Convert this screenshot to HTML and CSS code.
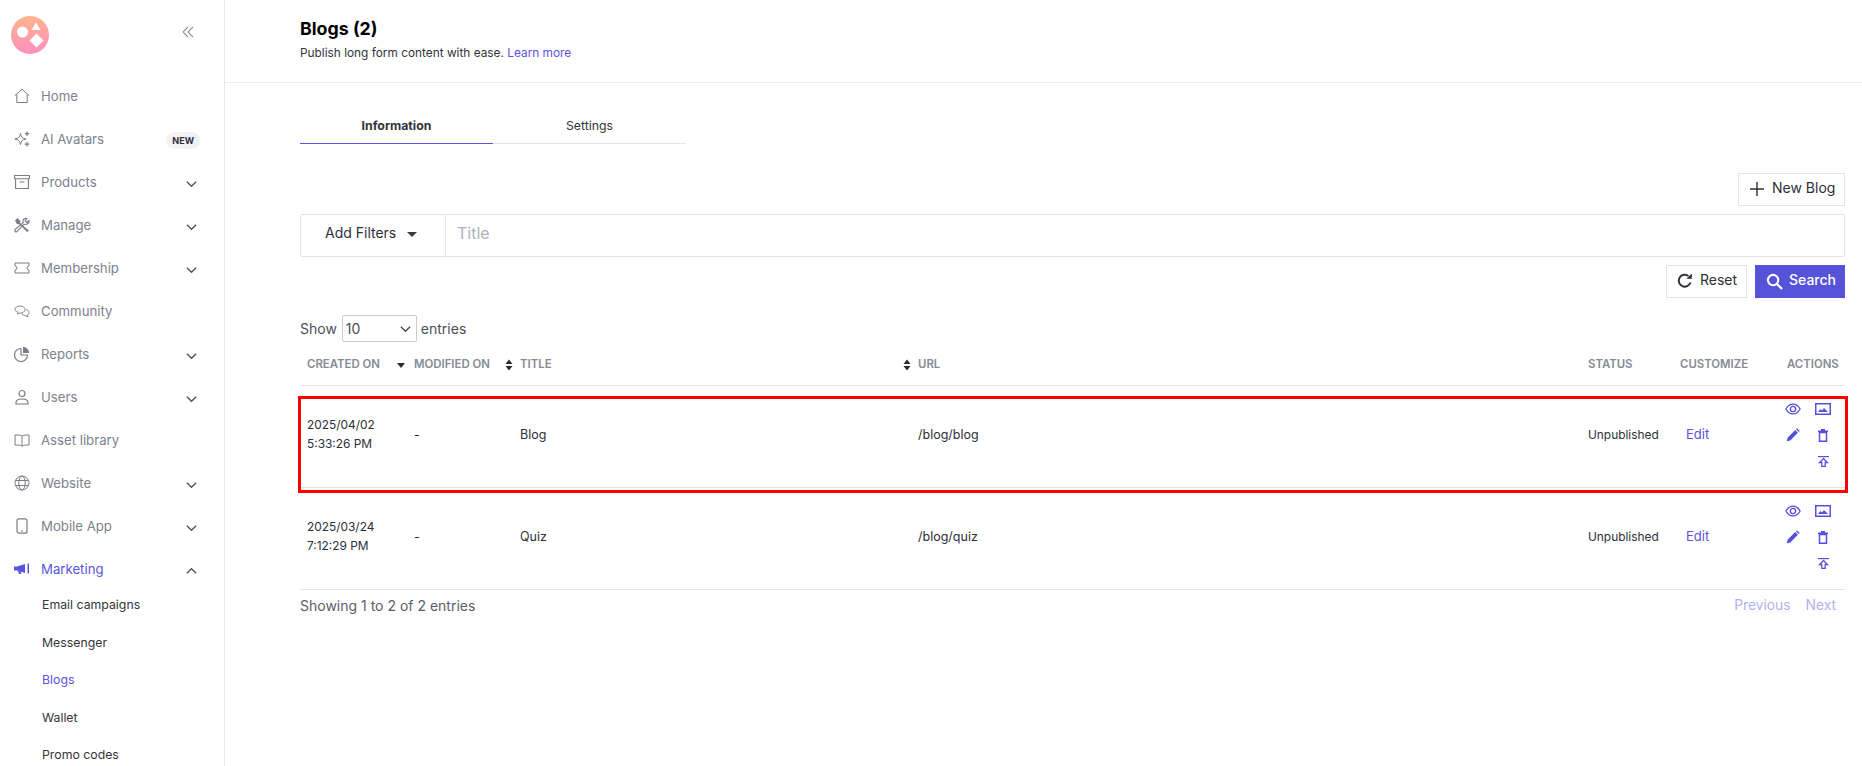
FILE: index.html
```html
<!DOCTYPE html>
<html lang="en">
<head>
<meta charset="utf-8">
<title>Blogs</title>
<link rel="stylesheet" href="styles.css">
</head>
<body>
<svg class="defs" width="0" height="0">
  <symbol id="chev" viewBox="0 0 12 8"><path d="M1 1.500l5 5 5-5" fill="none" stroke="currentColor" stroke-width="1.400"/></symbol>
  <symbol id="eye" viewBox="0 0 18 13"><path d="M1 6.500C3 3 5.800 1 9 1s6 2 8 5.500C15 10 12.200 12 9 12s-6-2-8-5.500z" fill="none" stroke="currentColor" stroke-width="1.500"/><circle cx="9" cy="6.500" r="3" fill="none" stroke="currentColor" stroke-width="1.500"/></symbol>
  <symbol id="img" viewBox="0 0 16 12"><rect x=".75" y=".75" width="14.500" height="10.500" fill="none" stroke="currentColor" stroke-width="1.500"/><path d="M3 9l2.500-3 1.500 1.500L9 5l4 4z" fill="currentColor"/></symbol>
  <symbol id="pen" viewBox="0 0 14 14"><path d="M.8 13.200l.8-3.500 7.600-7.600 2.700 2.700-7.600 7.600z" fill="currentColor"/><path d="M10 1.300l1-1 2.700 2.700-1 1z" fill="currentColor"/></symbol>
  <symbol id="trash" viewBox="0 0 10 13"><path d="M1.500 3.500h7v8.700h-7z" fill="none" stroke="currentColor" stroke-width="1.500"/><path d="M0 2.300h10M3 .7h4" stroke="currentColor" stroke-width="1.400" fill="none"/></symbol>
  <symbol id="pub" viewBox="0 0 11 11"><path d="M0 .6h11" stroke="currentColor" stroke-width="1.200"/><path d="M5.500 2.500L1.600 6.500h2.200v3.800h3.400V6.500h2.200z" fill="none" stroke="currentColor" stroke-width="1.300"/></symbol>
  <symbol id="sort" viewBox="0 0 8 12"><path d="M4 .5L7.500 5h-7zM4 11.500L.5 7h7z" fill="currentColor"/></symbol>
</svg>
<div class="app">
  <aside class="sidebar">
    <div class="brand">
      <svg class="logo" viewBox="0 0 38 38" width="38" height="38">
        <defs><linearGradient id="lg" x1="0" y1="0" x2="0" y2="1"><stop offset="0" stop-color="#ffb48c"/><stop offset="1" stop-color="#ff8fc0"/></linearGradient></defs>
        <circle cx="19" cy="19" r="19" fill="url(#lg)"/>
        <circle cx="11.500" cy="16" r="5.500" fill="#fff"/>
        <path d="M25 6.500l4.500 7.500h-9z" fill="#fff"/>
        <path d="M25.500 17.500l7 7-7 7-7-7z" fill="#fff"/>
      </svg>
      <svg class="collapse" viewBox="0 0 12 12" width="12" height="12"><path d="M6 1L1 6l5 5M11 1L6 6l5 5" fill="none" stroke="#8a8f99" stroke-width="1.100"/></svg>
    </div>
    <nav class="nav">
      <a class="item"><svg class="ic" viewBox="0 0 16 16"><path d="M.7 7.800L8 1.200l7.300 6.600M2.800 6.300V14.500h10.400V6.300" fill="none" stroke="currentColor" stroke-width="1"/></svg><span class="label">Home</span></a>
      <a class="item"><svg class="ic" viewBox="0 0 16 16"><path d="M6.500 2.500C7 6 8.500 7.500 12 8 8.500 8.500 7 10 6.500 13.500 6 10 4.500 8.500.8 8 4.500 7.500 6 6 6.500 2.500z" fill="none" stroke="currentColor" stroke-width="1"/><path d="M13 .5v4.500M10.800 2.700h4.500M13 11v4.500M10.800 13.200h4.500" stroke="currentColor" stroke-width="1.200"/></svg><span class="label">AI Avatars</span><span class="badge">NEW</span></a>
      <a class="item"><svg class="ic" viewBox="0 0 16 16"><path d="M.6 1.500h14.800v3.300H.6zM1.600 4.800v9.700h12.800V4.800M5.500 8h5" fill="none" stroke="currentColor" stroke-width="1.100"/></svg><span class="label">Products</span><svg class="chev"><use href="#chev"/></svg></a>
      <a class="item"><svg class="ic" viewBox="0 0 16 16"><path d="M1 3.500L3.500 1l3 3-.5 2 8.800 7.500-1.500 1.800L5 7 3 7.200z" fill="currentColor"/><path d="M15 3.500l-2.200 2-1.800-1.800 2-2.200c-2-.7-4 .6-4 2.800 0 .4 0 .8.200 1.100L1.200 12.500c-.7.700-.4 1.600 0 2s1.300.7 2-.1L10 7.200c2.300.9 5.500-.8 5-3.700z" fill="none" stroke="currentColor" stroke-width="1.100"/></svg><span class="label">Manage</span><svg class="chev"><use href="#chev"/></svg></a>
      <a class="item"><svg class="ic" viewBox="0 0 16 16"><path d="M1 3h14v3a2 2 0 0 0 0 4v3H1v-3a2 2 0 0 0 0-4z" fill="none" stroke="currentColor"/></svg><span class="label">Membership</span><svg class="chev"><use href="#chev"/></svg></a>
      <a class="item"><svg class="ic" viewBox="0 0 16 16"><path d="M6 3c3 0 5 1.500 5 3.500S9 10 6.500 10L3.500 11l.5-2C2 8.500 1 7.500 1 6.300 1 4.500 3 3 6 3zM12 6.500c2 .5 3 1.500 3 3 0 1-.5 2-1.500 2.500l.5 2-3-1.500c-1.500 0-3-.7-3.500-2.500" fill="none" stroke="currentColor" stroke-width=".9"/></svg><span class="label">Community</span></a>
      <a class="item"><svg class="ic" viewBox="0 0 16 16"><path d="M7 2.500a6.500 6.500 0 1 0 6.500 6.500H7z" fill="none" stroke="currentColor" stroke-width="1.200"/><path d="M9 .8a6.500 6.500 0 0 1 6.200 6.200H9z" fill="currentColor"/></svg><span class="label">Reports</span><svg class="chev"><use href="#chev"/></svg></a>
      <a class="item"><svg class="ic" viewBox="0 0 16 16"><circle cx="8" cy="4.500" r="3" fill="none" stroke="currentColor" stroke-width="1.200"/><path d="M2 15v-1.500C2 11 4 10 8 10s6 1 6 3.500V15z" fill="none" stroke="currentColor" stroke-width="1.200"/></svg><span class="label">Users</span><svg class="chev"><use href="#chev"/></svg></a>
      <a class="item"><svg class="ic" viewBox="0 0 16 16"><path d="M8 4C6.500 3 4 3 1 3v10c3 0 5.500 0 7 1 1.500-1 4-1 7-1V3c-3 0-5.500 0-7 1zM8 4v10" fill="none" stroke="currentColor"/></svg><span class="label">Asset library</span></a>
      <a class="item"><svg class="ic" viewBox="0 0 16 16"><circle cx="8" cy="8" r="7" fill="none" stroke="currentColor"/><ellipse cx="8" cy="8" rx="3.200" ry="7" fill="none" stroke="currentColor"/><path d="M1.500 5.500h13M1.500 10.500h13" stroke="currentColor"/></svg><span class="label">Website</span><svg class="chev"><use href="#chev"/></svg></a>
      <a class="item"><svg class="ic" viewBox="0 0 16 16"><rect x="3" y=".8" width="10" height="14.400" rx="2" fill="none" stroke="currentColor" stroke-width="1.200"/><path d="M7 13h2" stroke="currentColor"/></svg><span class="label">Mobile App</span><svg class="chev"><use href="#chev"/></svg></a>
      <a class="item active"><svg class="ic" viewBox="0 0 16 16"><path d="M0 5.500h3L11 3v9L3 9.500H0zM4 10l1 3h2.500l-1-2.500zM13.500 2.500H15v10h-1.500z" fill="currentColor"/></svg><span class="label">Marketing</span><svg class="chev up"><use href="#chev"/></svg></a>
    </nav>
    <div class="subnav">
      <a class="sub">Email campaigns</a>
      <a class="sub">Messenger</a>
      <a class="sub current">Blogs</a>
      <a class="sub">Wallet</a>
      <a class="sub">Promo codes</a>
    </div>
  </aside>
  <main class="main">
    <header class="head">
      <h1 class="title">Blogs (2)</h1>
      <p class="desc">Publish long form content with ease. <a class="link">Learn more</a></p>
    </header>
    <section class="content">
      <div class="tabs">
        <div class="tab on">Information</div>
        <div class="tab">Settings</div>
      </div>
      <div class="new-row">
        <button class="btn new"><svg viewBox="0 0 14 14" width="14" height="14"><path d="M7 0v14M0 7h14" stroke="currentColor" stroke-width="1.400"/></svg>New Blog</button>
      </div>
      <div class="filter">
        <div class="add">Add Filters<span class="caret"></span></div>
        <div class="ph">Title</div>
      </div>
      <div class="actions-row">
        <button class="btn reset"><svg viewBox="0 0 16 16" width="16" height="16"><path d="M13.500 9.500A6 6 0 1 1 11.500 3" fill="none" stroke="currentColor" stroke-width="1.900"/><path d="M9.500 5.800h5.300V.5z" fill="currentColor"/></svg>Reset</button>
        <button class="btn search"><svg viewBox="0 0 18 18" width="17" height="17"><circle cx="7.500" cy="7.500" r="5.500" fill="none" stroke="currentColor" stroke-width="2.200"/><path d="M11.500 11.500l5.500 5.500" stroke="currentColor" stroke-width="2.400"/></svg>Search</button>
      </div>
      <div class="show">Show <span class="select">10<svg class="sel-chev"><use href="#chev"/></svg></span> entries</div>
      <div class="table-wrap">
        <table class="table">
          <colgroup><col class="c1"><col class="c2"><col class="c3"><col class="c4"><col class="c5"><col class="c6"><col class="c7"></colgroup>
          <thead>
            <tr>
              <th>CREATED ON<svg class="sort down" viewBox="0 0 8 5"><path d="M0 0h8L4 5z" fill="currentColor"/></svg></th>
              <th>MODIFIED ON<svg class="sort"><use href="#sort"/></svg></th>
              <th>TITLE<svg class="sort"><use href="#sort"/></svg></th>
              <th>URL</th>
              <th>STATUS</th>
              <th>CUSTOMIZE</th>
              <th>ACTIONS</th>
            </tr>
          </thead>
          <tbody>
            <tr>
              <td class="small">2025/04/02<br>5:33:26 PM</td><td>-</td><td>Blog</td><td>/blog/blog</td><td class="small">Unpublished</td><td><a class="link edit">Edit</a></td>
              <td><div class="acts">
                <svg class="a eye"><use href="#eye"/></svg><svg class="a im"><use href="#img"/></svg>
                <svg class="a pen"><use href="#pen"/></svg><svg class="a tr"><use href="#trash"/></svg>
                <span></span><svg class="a pb"><use href="#pub"/></svg>
              </div></td>
            </tr>
            <tr>
              <td class="small">2025/03/24<br>7:12:29 PM</td><td>-</td><td>Quiz</td><td>/blog/quiz</td><td class="small">Unpublished</td><td><a class="link edit">Edit</a></td>
              <td><div class="acts">
                <svg class="a eye"><use href="#eye"/></svg><svg class="a im"><use href="#img"/></svg>
                <svg class="a pen"><use href="#pen"/></svg><svg class="a tr"><use href="#trash"/></svg>
                <span></span><svg class="a pb"><use href="#pub"/></svg>
              </div></td>
            </tr>
          </tbody>
        </table>
        <div class="highlight"></div>
      </div>
      <div class="foot">
        <span>Showing 1 to 2 of 2 entries</span>
        <span class="pager"><a>Previous</a><a>Next</a></span>
      </div>
    </section>
  </main>
</div>
</body>
</html>
```
FILE: styles.css
```css
* { box-sizing: border-box; }
html, body { margin: 0; height: 100%; overflow: hidden; background: #fff; }
body { font-family: Inter, "Liberation Sans", sans-serif; color: #2d2f36; font-size: 13px; }
.defs { position: absolute; }
.app { display: flex; height: 766px; overflow: hidden; }

.sidebar { width: 225px; flex: none; border-right: 1px solid #e6e6e6; height: 766px; overflow: hidden; }
.brand { height: 74px; display: flex; align-items: center; padding: 0 0 4px 11px; }
.logo { flex: none; }
.collapse { margin-left: 133px; margin-top: -6px; }
.nav { display: flex; flex-direction: column; }
.item { height: 43px; display: flex; align-items: center; padding: 0 27px 0 14px; color: #7d828e; font-size: 13.200px; }
.ic { width: 16px; height: 16px; flex: none; margin-right: 11px; color: #7a7d85; }
.label { flex: 1; }
.chev { width: 11px; height: 8px; color: #4a5063; margin-top: 5px; }
.chev.up { transform: rotate(180deg); }
.active, .active .ic { color: #5b54e0; }
.badge { font-size: 9px; font-weight: 700; color: #2c3040; padding: 3px 6px; border-radius: 9px; background: linear-gradient(90deg, #fbf3ee, #eeeefb); margin: 3px -3px 0 0; }
.subnav { display: flex; flex-direction: column; margin-top: -4px; }
.sub { height: 37.500px; display: flex; align-items: center; padding-left: 42px; font-size: 12.300px; color: #33353b; }
.current { color: #5b54e0; }

.main { flex: 1; min-width: 0; }
.head { height: 83px; border-bottom: 1px solid #ececec; padding: 17px 0 0 75px; }
.title { margin: 0; font-size: 17.800px; line-height: 24px; font-weight: 700; color: #000; }
.desc { margin: 3px 0 0; font-size: 11.850px; line-height: 18px; color: #33353b; }
.link { color: #5b54e0; }
.content { padding: 0 17px 0 75px; }
.tabs { display: flex; width: 386px; margin-top: 18px; height: 43px; border-bottom: 1px solid #e5e5e8; }
.tab { width: 193px; height: 43px; text-align: center; font-size: 12.300px; line-height: 50px; color: #33353b; }
.tab.on { font-weight: 700; border-bottom: 1px solid #5b54e0; }
.new-row { display: flex; justify-content: flex-end; margin-top: 29px; }
.btn { height: 33px; border: 1px solid #e4e4e4; background: #fff; font: inherit; font-size: 14px; color: #2d2f36; display: inline-flex; align-items: center; gap: 8px; padding: 0 8px 5px 11px; white-space: nowrap; }
.btn svg { margin-top: 4px; flex: none; }
.new { width: 107px; padding: 0 0 5px 11px; }
.filter { display: flex; height: 43px; margin-top: 8px; border: 1px solid #e4e4e4; border-radius: 2px; }
.add { width: 145px; border-right: 1px solid #e4e4e4; font-size: 14px; padding-left: 24px; line-height: 36px; }
.caret { display: inline-block; margin-left: 11px; border: 5px solid transparent; border-top-color: #3a3a3a; border-bottom: 0; vertical-align: middle; }
.ph { padding-left: 11px; line-height: 37px; font-size: 16px; color: #adb2bd; }
.actions-row { display: flex; justify-content: flex-end; gap: 8px; margin-top: 8px; }
.reset { width: 81px; padding-left: 10px; gap: 7px; }
.search { width: 90px; background: #5753d9; border-color: #5753d9; color: #fff; font-weight: 500; gap: 6px; padding-left: 10px; }
.show { margin-top: 17px; height: 26px; display: flex; align-items: center; gap: 4px; font-size: 14px; color: #4b4f58; }
.select { width: 75px; height: 27px; margin: 0 0 0 1px; border: 1px solid #c9ccd3; border-radius: 2px; padding: 0 5px 0 3px; display: flex; align-items: center; justify-content: space-between; color: #4b4f58; }
.sel-chev { width: 11px; height: 8px; color: #3f4450; margin-top: 2px; }
.table-wrap { position: relative; }
.table { border-collapse: collapse; table-layout: fixed; width: 100%; }
.c1 { width: 107px; } .c2 { width: 106px; } .c3 { width: 398px; } .c4 { width: 670px; } .c5 { width: 92px; } .c6 { width: 107px; }
th { height: 44px; text-align: left; padding: 2px 7px 0; font-size: 11.400px; font-weight: 600; color: #858a94; border-bottom: 1px solid #e5e5e5; position: relative; white-space: nowrap; }
td { height: 102px; padding: 0 7px 4px; font-size: 12.500px; line-height: 19px; color: #2d2f36; border-bottom: 1px solid #e5e5e5; vertical-align: middle; }
td.small { font-size: 11.900px; }
.edit { font-size: 13px; margin-left: 6px; }
.sort { position: absolute; right: 0; top: 18px; width: 8px; height: 12px; color: #2b2b2b; }
.sort.down { height: 5px; top: 22px; right: 2px; }
.acts { display: grid; grid-template-columns: 30px 30px; grid-auto-rows: 26.500px; align-items: center; justify-items: center; justify-content: start; margin: 2px 0 0 -9px; }
.a { color: #5450dc; }
.eye { width: 16px; height: 12px; }
.im { width: 16px; height: 12px; }
.pen { width: 14px; height: 14px; }
.tr { width: 10px; height: 13px; }
.pb { width: 11px; height: 11px; }
.highlight { position: absolute; left: -2px; right: -3px; top: 55px; height: 97px; border: 3px solid #f00; pointer-events: none; }
.foot { display: flex; justify-content: space-between; align-items: center; margin-top: 7px; font-size: 14px; color: #5a5e68; }
.pager { display: flex; gap: 15px; padding-right: 9px; font-size: 13.800px; color: #b3b1ec; }
```
